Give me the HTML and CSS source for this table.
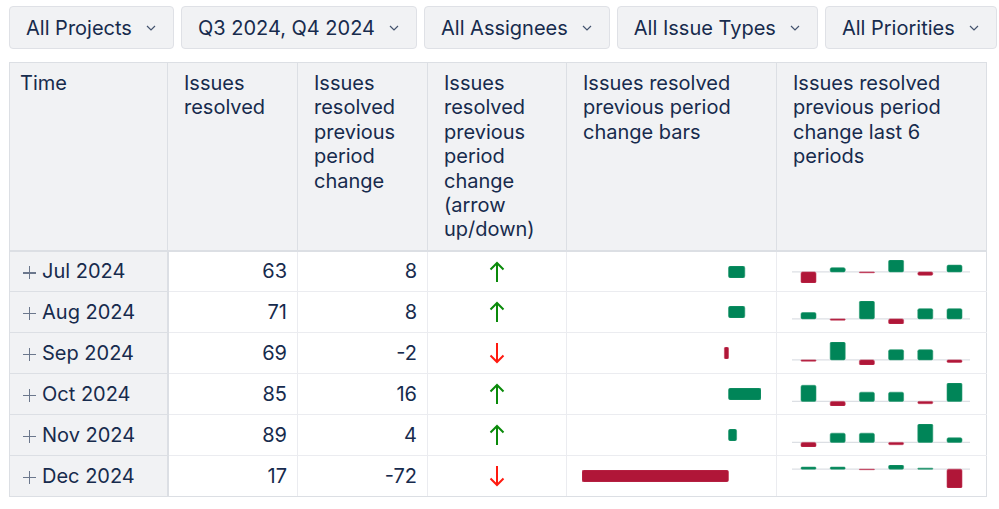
FILE: index.html
```html
<!DOCTYPE html>
<html>
<head>
<meta charset="utf-8">
<link rel="stylesheet" href="styles.css">
</head>
<body>
<div class="page">
  <div class="filters">
    <button class="filter">All Projects<svg class="chev" width="10" height="6" viewBox="0 0 10 6"><path d="M1 1 L5 5 L9 1"/></svg></button>
    <button class="filter">Q3 2024, Q4 2024<svg class="chev" width="10" height="6" viewBox="0 0 10 6"><path d="M1 1 L5 5 L9 1"/></svg></button>
    <button class="filter">All Assignees<svg class="chev" width="10" height="6" viewBox="0 0 10 6"><path d="M1 1 L5 5 L9 1"/></svg></button>
    <button class="filter">All Issue Types<svg class="chev" width="10" height="6" viewBox="0 0 10 6"><path d="M1 1 L5 5 L9 1"/></svg></button>
    <button class="filter">All Priorities<svg class="chev" width="10" height="6" viewBox="0 0 10 6"><path d="M1 1 L5 5 L9 1"/></svg></button>
  </div>

  <table class="report">
    <colgroup>
      <col class="c-time"><col class="c-num"><col class="c-num"><col class="c-arrow"><col class="c-wide"><col class="c-wide">
    </colgroup>
    <thead>
      <tr>
        <th class="th-time">Time</th>
        <th>Issues resolved</th>
        <th>Issues resolved previous period change</th>
        <th>Issues resolved previous period change (arrow up/down)</th>
        <th>Issues resolved previous period change bars</th>
        <th>Issues resolved previous period change last 6 periods</th>
      </tr>
    </thead>
    <tbody>
      <tr>
        <td class="time"><span class="plus"></span>Jul 2024</td>
        <td class="num">63</td>
        <td class="num">8</td>
        <td class="arrow"><svg class="up" width="16" height="22" viewBox="0 0 16 22"><path d="M8 21 V2 M1.5 8.5 L8 2 L14.5 8.5"/></svg></td>
        <td class="bars"><svg class="hbar" width="179" height="12" viewBox="0 0 179 12"><rect class="pos" x="146.5" y="0" width="16.3" height="12" rx="2"/></svg></td>
        <td class="spark"><svg width="178" height="23" viewBox="0 0 178 23"><line class="base" x1="0" x2="178" y1="11.93" y2="11.93"/>
          <rect class="neg" x="9" y="11.93" width="15" height="11.07" rx="1.5"/>
          <rect class="pos" x="38.2" y="7.67" width="15" height="4.26" rx="1.5"/>
          <rect class="neg" x="67.4" y="11.93" width="15" height="0.85" rx="0.4"/>
          <rect class="pos" x="96.6" y="0" width="15" height="11.93" rx="1.5"/>
          <rect class="neg" x="125.8" y="11.93" width="15" height="3.41" rx="1.5"/>
          <rect class="pos" x="155" y="5.11" width="15" height="6.82" rx="1.5"/>
        </svg></td>
      </tr>
      <tr>
        <td class="time"><span class="plus"></span>Aug 2024</td>
        <td class="num">71</td>
        <td class="num">8</td>
        <td class="arrow"><svg class="up" width="16" height="22" viewBox="0 0 16 22"><path d="M8 21 V2 M1.5 8.5 L8 2 L14.5 8.5"/></svg></td>
        <td class="bars"><svg class="hbar" width="179" height="12" viewBox="0 0 179 12"><rect class="pos" x="146.5" y="0" width="16.3" height="12" rx="2"/></svg></td>
        <td class="spark"><svg width="178" height="23" viewBox="0 0 178 23"><line class="base" x1="0" x2="178" y1="17.89" y2="17.89"/>
          <rect class="pos" x="9" y="11.5" width="15" height="6.39" rx="1.5"/>
          <rect class="neg" x="38.2" y="17.89" width="15" height="1.28" rx="0.6"/>
          <rect class="pos" x="67.4" y="0" width="15" height="17.89" rx="1.5"/>
          <rect class="neg" x="96.6" y="17.89" width="15" height="5.11" rx="1.5"/>
          <rect class="pos" x="125.8" y="7.67" width="15" height="10.22" rx="1.5"/>
          <rect class="pos" x="155" y="7.67" width="15" height="10.22" rx="1.5"/>
        </svg></td>
      </tr>
      <tr>
        <td class="time"><span class="plus"></span>Sep 2024</td>
        <td class="num">69</td>
        <td class="num">-2</td>
        <td class="arrow"><svg class="down" width="16" height="22" viewBox="0 0 16 22"><path d="M8 1 V20 M1.5 13.5 L8 20 L14.5 13.5"/></svg></td>
        <td class="bars"><svg class="hbar" width="179" height="12" viewBox="0 0 179 12"><rect class="neg" x="142.4" y="0" width="4.1" height="12" rx="1.5"/></svg></td>
        <td class="spark"><svg width="178" height="23" viewBox="0 0 178 23"><line class="base" x1="0" x2="178" y1="17.89" y2="17.89"/>
          <rect class="neg" x="9" y="17.89" width="15" height="1.28" rx="0.6"/>
          <rect class="pos" x="38.2" y="0" width="15" height="17.89" rx="1.5"/>
          <rect class="neg" x="67.4" y="17.89" width="15" height="5.11" rx="1.5"/>
          <rect class="pos" x="96.6" y="7.67" width="15" height="10.22" rx="1.5"/>
          <rect class="pos" x="125.8" y="7.67" width="15" height="10.22" rx="1.5"/>
          <rect class="neg" x="155" y="17.89" width="15" height="2.56" rx="1.2"/>
        </svg></td>
      </tr>
      <tr>
        <td class="time"><span class="plus"></span>Oct 2024</td>
        <td class="num">85</td>
        <td class="num">16</td>
        <td class="arrow"><svg class="up" width="16" height="22" viewBox="0 0 16 22"><path d="M8 21 V2 M1.5 8.5 L8 2 L14.5 8.5"/></svg></td>
        <td class="bars"><svg class="hbar" width="179" height="12" viewBox="0 0 179 12"><rect class="pos" x="146.5" y="0" width="32.5" height="12" rx="2"/></svg></td>
        <td class="spark"><svg width="178" height="23" viewBox="0 0 178 23"><line class="base" x1="0" x2="178" y1="18.4" y2="18.4"/>
          <rect class="pos" x="9" y="2.3" width="15" height="16.1" rx="1.5"/>
          <rect class="neg" x="38.2" y="18.4" width="15" height="4.6" rx="1.5"/>
          <rect class="pos" x="67.4" y="9.2" width="15" height="9.2" rx="1.5"/>
          <rect class="pos" x="96.6" y="9.2" width="15" height="9.2" rx="1.5"/>
          <rect class="neg" x="125.8" y="18.4" width="15" height="2.3" rx="1.1"/>
          <rect class="pos" x="155" y="0" width="15" height="18.4" rx="1.5"/>
        </svg></td>
      </tr>
      <tr>
        <td class="time"><span class="plus"></span>Nov 2024</td>
        <td class="num">89</td>
        <td class="num">4</td>
        <td class="arrow"><svg class="up" width="16" height="22" viewBox="0 0 16 22"><path d="M8 21 V2 M1.5 8.5 L8 2 L14.5 8.5"/></svg></td>
        <td class="bars"><svg class="hbar" width="179" height="12" viewBox="0 0 179 12"><rect class="pos" x="146.5" y="0" width="8.1" height="12" rx="2"/></svg></td>
        <td class="spark"><svg width="178" height="23" viewBox="0 0 178 23"><line class="base" x1="0" x2="178" y1="18.4" y2="18.4"/>
          <rect class="neg" x="9" y="18.4" width="15" height="4.6" rx="1.5"/>
          <rect class="pos" x="38.2" y="9.2" width="15" height="9.2" rx="1.5"/>
          <rect class="pos" x="67.4" y="9.2" width="15" height="9.2" rx="1.5"/>
          <rect class="neg" x="96.6" y="18.4" width="15" height="2.3" rx="1.1"/>
          <rect class="pos" x="125.8" y="0" width="15" height="18.4" rx="1.5"/>
          <rect class="pos" x="155" y="13.8" width="15" height="4.6" rx="1.5"/>
        </svg></td>
      </tr>
      <tr>
        <td class="time"><span class="plus"></span>Dec 2024</td>
        <td class="num">17</td>
        <td class="num">-72</td>
        <td class="arrow"><svg class="down" width="16" height="22" viewBox="0 0 16 22"><path d="M8 1 V20 M1.5 13.5 L8 20 L14.5 13.5"/></svg></td>
        <td class="bars"><svg class="hbar" width="179" height="12" viewBox="0 0 179 12"><rect class="neg" x="0" y="0" width="146.5" height="12" rx="2"/></svg></td>
        <td class="spark"><svg width="178" height="23" viewBox="0 0 178 23"><line class="base" x1="0" x2="178" y1="4.18" y2="4.18"/>
          <rect class="pos" x="9" y="2.09" width="15" height="2.09" rx="1"/>
          <rect class="pos" x="38.2" y="2.09" width="15" height="2.09" rx="1"/>
          <rect class="neg" x="67.4" y="4.18" width="15" height="0.52" rx="0.2"/>
          <rect class="pos" x="96.6" y="0" width="15" height="4.18" rx="1.5"/>
          <rect class="pos" x="125.8" y="3.14" width="15" height="1.05" rx="0.5"/>
          <rect class="neg" x="155" y="4.18" width="15" height="18.82" rx="1.5"/>
        </svg></td>
      </tr>
    </tbody>
  </table>
</div>
</body>
</html>
```

FILE: styles.css
```css
* { box-sizing: border-box; }

html, body {
  margin: 0;
  padding: 0;
  background: #ffffff;
}

body {
  font-family: "Inter", "Liberation Sans", sans-serif;
  color: #172b4d;
}

.page {
  padding: 6px 0 0 9px;
}

.filters {
  display: flex;
  gap: 7px;
  margin-bottom: 13px;
}

.filter {
  display: flex;
  align-items: center;
  height: 43px;
  padding: 0 17px 0 16px;
  background: #f1f2f4;
  border: 1px solid #dfe1e6;
  border-radius: 4px;
  font-family: inherit;
  font-size: 20px;
  color: #172b4d;
  gap: 14px;
}

.chev {
  fill: none;
  stroke: #44546f;
  stroke-width: 1.2;
}

.report {
  border-collapse: collapse;
  table-layout: fixed;
  width: 977px;
  font-size: 20px;
  line-height: 24.4px;
}

.c-time { width: 158px; }
.c-num { width: 130px; }
.c-arrow { width: 139px; }
.c-wide { width: 210px; }

.report th {
  background: #f1f2f4;
  border: 1px solid #dcdfe4;
  border-bottom-width: 2px;
  text-align: left;
  vertical-align: top;
  font-weight: normal;
  padding: 8px 10px 8px 16px;
  height: 188px;
}

.report th.th-time {
  padding-left: 10px;
}

.report td {
  border: 1px solid #ebecf0;
  height: 41px;
  padding: 0 10px;
  vertical-align: middle;
}

.report tr:last-child td {
  border-bottom: 1px solid #dcdfe4;
}

.report td:last-child {
  border-right: 1px solid #dcdfe4;
}

.report td.time {
  background: #f1f2f4;
  border: 1px solid #dcdfe4;
  border-right-width: 2px;
  padding-left: 13px;
  white-space: nowrap;
}

.plus {
  display: inline-block;
  position: relative;
  width: 13px;
  height: 13px;
  margin-right: 6px;
  vertical-align: -1px;
}

.plus::before,
.plus::after {
  content: "";
  position: absolute;
  background: #6b778c;
}

.plus::before {
  left: 0;
  right: 0;
  top: 6px;
  height: 1.3px;
}

.plus::after {
  top: 0;
  bottom: 0;
  left: 6px;
  width: 1.3px;
}

.report td.num {
  text-align: right;
}

.report td.arrow {
  text-align: center;
  padding: 0;
}

.report td.arrow svg {
  display: block;
  margin: 0 auto;
  fill: none;
  stroke-width: 2;
}

.up { stroke: #0a8a0a; }
.down { stroke: #ff1a10; }

.report td.bars {
  padding: 0 0 0 15px;
}

.report td.spark {
  padding: 0 0 0 15px;
}

.report td svg {
  display: block;
}

.pos { fill: #008558; stroke: #2a9a72; stroke-width: 0.6; }
.neg { fill: #b01638; stroke: #c23a58; stroke-width: 0.6; }

.base {
  stroke: #dcdfe4;
  stroke-width: 1.2;
}
```
